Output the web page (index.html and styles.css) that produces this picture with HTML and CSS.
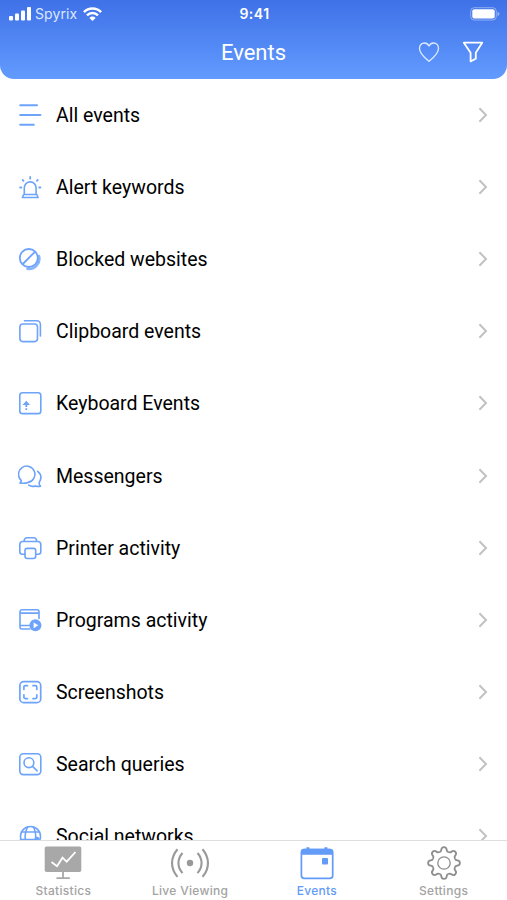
FILE: index.html
```html
<!DOCTYPE html>
<html lang="en">
<head>
<meta charset="utf-8">
<title>Events</title>
<link rel="stylesheet" href="styles.css">
</head>
<body>
<div class="app">
  <header class="header">
    <div class="status">
      <div class="carrier">
        <svg width="22" height="14" viewBox="0 0 22 14" fill="currentColor"><rect x="0" y="9" width="4" height="4.500" rx="1"/><rect x="6" y="6.500" width="4" height="7" rx="1"/><rect x="12" y="3.500" width="4" height="10" rx="1"/><rect x="18" y="0" width="4" height="13.500" rx="1"/></svg>
        <span class="carrier-name">Spyrix</span>
        <svg width="19" height="14" viewBox="0 0 19 14" fill="none" stroke="currentColor" stroke-width="2.500"><path d="M.9 5.100a12.300 12.300 0 0 1 17.200 0M4 8.300a7.800 7.800 0 0 1 11 0"/><path d="M6.400 10.900a4.300 4.300 0 0 1 6.200 0L9.500 14z" fill="currentColor" stroke="none"/></svg>
      </div>
      <time class="clock">9:41</time>
      <svg class="battery" width="30" height="14" viewBox="0 0 30 14"><rect x=".7" y=".7" width="25.600" height="12.300" rx="3.500" fill="none" stroke="#fff" stroke-opacity=".4"/><rect x="2.300" y="2.300" width="22.400" height="9.200" rx="2" fill="#fff"/><path d="M27.500 4.700q2 .7 2 2.200t-2 2.200z" fill="#fff" opacity=".45"/></svg>
    </div>
    <div class="titlebar">
      <h1 class="title">Events</h1>
      <div class="actions">
        <svg width="22" height="22" viewBox="0 0 22 22" fill="none" stroke="#dce9ff" stroke-width="1.350" stroke-linejoin="round"><path d="M11 20.300C7.500 17.400 1.500 12.600 1.500 7.400c0-3 2.100-5.400 4.900-5.400C8.500 2 10.100 3.200 11 5c.9-1.800 2.500-3 4.600-3 2.800 0 4.900 2.400 4.900 5.400 0 5.200-6 10-9.500 12.900z"/></svg>
        <svg width="22" height="22" viewBox="0 0 22 22" fill="none" stroke="#fff" stroke-width="1.800" stroke-linejoin="round"><path d="M1.800 1.700h18.400l-6.400 10.100v6L8.600 20.400v-8.600z"/></svg>
      </div>
    </div>
  </header>

  <main class="list">
    <a class="row"><svg class="icon" viewBox="0 0 24 24"><path stroke-width="2" d="M2.200 2.300H19M2.200 12h20.200M2.200 21.700h13.600"/></svg><span class="label">All events</span><svg class="chevron" viewBox="0 0 10 16"><path d="m1.400 1.200 6.600 6.800-6.600 6.800"/></svg></a>
    <a class="row"><svg class="icon" viewBox="0 0 24 24"><path d="M6.300 19.500v-6.700a5.900 5.900 0 0 1 11.800 0v6.700M5.700 19.500h13.100l1.300 3H4.300z"/><path stroke-width="1.800" d="M12.200 2v1.700M4.700 4.900l.8.900M19.700 4.900l-.8.900M2.100 12.500h1.200M21.200 12.500h1.200"/></svg><span class="label">Alert keywords</span><svg class="chevron" viewBox="0 0 10 16"><path d="m1.400 1.200 6.600 6.800-6.600 6.800"/></svg></a>
    <a class="row"><svg class="icon" viewBox="0 0 24 24"><circle cx="10.800" cy="11" r="9" stroke-width="1.800"/><path stroke-width="1.800" d="M4.800 17 16.900 4.800"/><path stroke-width="2.600" opacity=".8" d="M21 9a10.300 10.300 0 0 1-11.500 12.800"/></svg><span class="label">Blocked websites</span><svg class="chevron" viewBox="0 0 10 16"><path d="m1.400 1.200 6.600 6.800-6.600 6.800"/></svg></a>
    <a class="row"><svg class="icon" viewBox="0 0 24 24"><rect x="1.900" y="5" width="17.600" height="17.600" rx="3"/><path d="M6.500 1.800h12.300a3.600 3.600 0 0 1 3.600 3.600V17"/></svg><span class="label">Clipboard events</span><svg class="chevron" viewBox="0 0 10 16"><path d="m1.400 1.200 6.600 6.800-6.600 6.800"/></svg></a>
    <a class="row"><svg class="icon" viewBox="0 0 24 24"><rect x="1.800" y="1.800" width="21" height="20.800" rx="2.700"/><path fill="currentColor" stroke="none" d="m8.300 9.800 3.700 4.300H9.200v2H7.400v-2H4.600zM7.400 17.200h1.800v1.700H7.400z"/></svg><span class="label">Keyboard Events</span><svg class="chevron" viewBox="0 0 10 16"><path d="m1.400 1.200 6.600 6.800-6.600 6.800"/></svg></a>
    <a class="row"><svg class="icon" viewBox="0 0 24 24"><path d="M1.900 18.900c1.200-.7 1.700-1.500 1.200-2.600A8.200 8.200 0 1 1 10 18.400c-2.500 1-5 1.100-8.100.5z"/><path d="M19.700 7.300c3.600 3 3.800 7.300 1.700 10.800-.5 1.700-.2 2.900 1.100 4.100-2.200.5-3.600.2-4.900-.3-2.800.9-5 .6-6.800-.8"/></svg><span class="label">Messengers</span><svg class="chevron" viewBox="0 0 10 16"><path d="m1.400 1.200 6.600 6.800-6.600 6.800"/></svg></a>
    <a class="row"><svg class="icon" viewBox="0 0 24 24"><path d="M6 5.500c.2-2.500 1-3.800 3-3.800h6.700c2 0 2.900 1.300 3 3.800M7 18.200H4.300a2.500 2.500 0 0 1-2.500-2.500V8.500A3 3 0 0 1 4.800 5.500h15a3 3 0 0 1 3 3v7.200a2.500 2.500 0 0 1-2.500 2.500h-2.600"/><rect x="7" y="12.400" width="10.700" height="10.100" rx="2.200"/></svg><span class="label">Printer activity</span><svg class="chevron" viewBox="0 0 10 16"><path d="m1.400 1.200 6.600 6.800-6.600 6.800"/></svg></a>
    <a class="row"><svg class="icon" viewBox="0 0 24 24"><path d="M21 10.500V3.700a2 2 0 0 0-2-2H4a2 2 0 0 0-2 2v15.600c0 1 .8 1.700 1.800 1.700h8M2 5.100h19M2 17.500h9.500"/><circle cx="17.400" cy="17.300" r="6" fill="currentColor" stroke="none"/><path fill="#fff" stroke="none" d="m15.600 14.500 4.700 2.800-4.700 2.900z"/></svg><span class="label">Programs activity</span><svg class="chevron" viewBox="0 0 10 16"><path d="m1.400 1.200 6.600 6.800-6.600 6.800"/></svg></a>
    <a class="row"><svg class="icon" viewBox="0 0 24 24"><rect x="1.900" y="1.700" width="20.800" height="20.900" rx="3.700" stroke-width="1.700"/><path stroke-width="1.700" d="M5.900 9.500V7c0-.8.500-1.300 1.300-1.300h2.300M15 5.700h2.500c.8 0 1.300.5 1.300 1.300v2.500M18.800 14.800v2.500c0 .8-.5 1.300-1.300 1.300H15M9.500 18.600H7.200c-.8 0-1.300-.5-1.300-1.300v-2.500"/></svg><span class="label">Screenshots</span><svg class="chevron" viewBox="0 0 10 16"><path d="m1.400 1.200 6.600 6.800-6.600 6.800"/></svg></a>
    <a class="row"><svg class="icon" viewBox="0 0 24 24"><rect x="1.800" y="1.700" width="21" height="20.900" rx="3.500"/><circle cx="10.900" cy="10.700" r="4.900"/><path d="m14.500 14.300 4.700 4.500"/></svg><span class="label">Search queries</span><svg class="chevron" viewBox="0 0 10 16"><path d="m1.400 1.200 6.600 6.800-6.600 6.800"/></svg></a>
    <a class="row"><svg class="icon" viewBox="0 0 24 24"><circle cx="12.500" cy="12.500" r="10"/><path d="M3.500 8h18M2.500 15.500h16M9.500 3C6.500 9 6.500 16 9.500 22M15.500 3c2 4 2.500 7.500 2.100 11"/><circle cx="19" cy="15.400" r="2.600" fill="currentColor" stroke="none"/></svg><span class="label">Social networks</span><svg class="chevron" viewBox="0 0 10 16"><path d="m1.400 1.200 6.600 6.800-6.600 6.800"/></svg></a>
  </main>

  <nav class="tabs">
    <a class="tab"><svg class="tab-icon" viewBox="0 0 42 38"><rect x="2.700" y="3.500" width="36.600" height="25.500" rx="1.800" fill="#a8a8a8"/><path d="M21 29v6M14.500 35.200h13.300" fill="none" stroke="#a8a8a8" stroke-width="1.800"/><path d="m9.500 19 5.500 4.200 5.500-8.500 4.200 4L33.500 9" fill="none" stroke="#fff" stroke-width="1.800"/></svg><span>Statistics</span></a>
    <a class="tab"><svg class="tab-icon" viewBox="0 0 42 38"><circle cx="21" cy="20" r="3.200" fill="#999"/><path d="M8.500 6.200c-7.300 8.500-7.300 19.200 0 27.700M13.500 10c-5.400 6-5.400 14.100 0 20.100M33.500 6.200c7.300 8.500 7.300 19.200 0 27.700M28.500 10c5.400 6 5.400 14.100 0 20.100" fill="none" stroke="#999" stroke-width="2.100"/></svg><span>Live Viewing</span></a>
    <a class="tab tab-active"><svg class="tab-icon" viewBox="0 0 42 38"><path d="M8.300 6.500h25.500a2.900 2.900 0 0 1 2.900 2.900v23a2.900 2.900 0 0 1-2.900 2.900H8.300a2.900 2.900 0 0 1-2.900-2.900v-23a2.900 2.900 0 0 1 2.900-2.900z" fill="#fff" stroke="currentColor" stroke-width="1.700"/><path d="M5 11.800V8.600Q5 5.700 8 5.700h2.400V4.200h3v1.500h15V4.200h3v1.500H34q3 0 3 2.900v3.200z" fill="currentColor"/><rect x="26" y="15" width="6" height="6.400" rx="1" fill="currentColor"/></svg><span>Events</span></a>
    <a class="tab"><svg class="tab-icon" viewBox="0 0 42 38" fill="none" stroke="#8e8e8e" stroke-width="1.800"><defs><path id="tooth" d="M-4.700-11.300C-3.500-10.900-2.800-12-2.700-13.200C-2.500-15.300-1.600-15.900 0-15.900S2.500-15.300 2.700-13.200C2.800-12 3.500-10.900 4.700-11.300"/></defs><g transform="translate(21 20)"><use href="#tooth"/><use href="#tooth" transform="rotate(45)"/><use href="#tooth" transform="rotate(90)"/><use href="#tooth" transform="rotate(135)"/><use href="#tooth" transform="rotate(180)"/><use href="#tooth" transform="rotate(225)"/><use href="#tooth" transform="rotate(270)"/><use href="#tooth" transform="rotate(315)"/><circle r="6.200" stroke-width="1.300"/></g></svg><span>Settings</span></a>
  </nav>
</div>
</body>
</html>
```
FILE: styles.css
```css
* { box-sizing: border-box; }
body { margin: 0; background: #fff; font-family: Roboto, "Liberation Sans", sans-serif; color: #111; }
svg { display: block; flex: none; }
.app { width: 507px; height: 900px; display: flex; flex-direction: column; overflow: hidden; }
.header { height: 79px; flex: none; border-radius: 0 0 14px 14px; background: linear-gradient(#3f71e7, #629bff); color: #fff; }
.status { height: 27px; padding: 0 7px 0 9px; display: grid; grid-template-columns: 1fr auto 1fr; align-items: center; font-family: Inter, sans-serif; }
.carrier { display: flex; align-items: center; }
.carrier-name { margin: 0 6px 0 4px; font-size: 14px; line-height: 18px; letter-spacing: 0.1px; color: #dce7ff; }
.clock { font-size: 14px; font-weight: 600; letter-spacing: 0.5px; }
.battery { justify-self: end; }
.titlebar { height: 50px; display: grid; grid-template-columns: 1fr auto 1fr; align-items: center; padding-right: 23px; padding-left: 23px; }
.title { grid-column: 2; margin: 0; padding-top: 1px; font-size: 22px; line-height: 26px; font-weight: 400; }
.actions { display: flex; justify-content: flex-end; gap: 22px; }
.list { flex: 1; min-height: 0; overflow: hidden; }
.row { height: 72.1px; padding: 0 18px; display: flex; align-items: center; }
.icon { width: 24px; height: 24px; margin-right: 14px; color: #6da3fa; fill: none; stroke: currentColor; stroke-width: 1.6; stroke-linecap: round; stroke-linejoin: round; }
.label { flex: 1; padding-top: 2px; font-size: 19.5px; line-height: 24px; color: #000; }
.chevron { width: 10px; height: 16px; margin-right: 1px; fill: none; stroke: #c2c2c4; stroke-width: 2; }
.tabs { height: 60px; flex: none; display: grid; grid-template-columns: repeat(4, 1fr); border-top: 1px solid #dedede; background: #fff; }
.tab { display: flex; flex-direction: column; align-items: center; padding-top: 2px; font-family: Inter, sans-serif; font-size: 12px; font-weight: 500; line-height: 16px; letter-spacing: 0.3px; color: #a3a3a3; }
.tab-icon { width: 42px; height: 38px; margin-bottom: 2px; }
.tab-active { color: #629bf8; }
```
